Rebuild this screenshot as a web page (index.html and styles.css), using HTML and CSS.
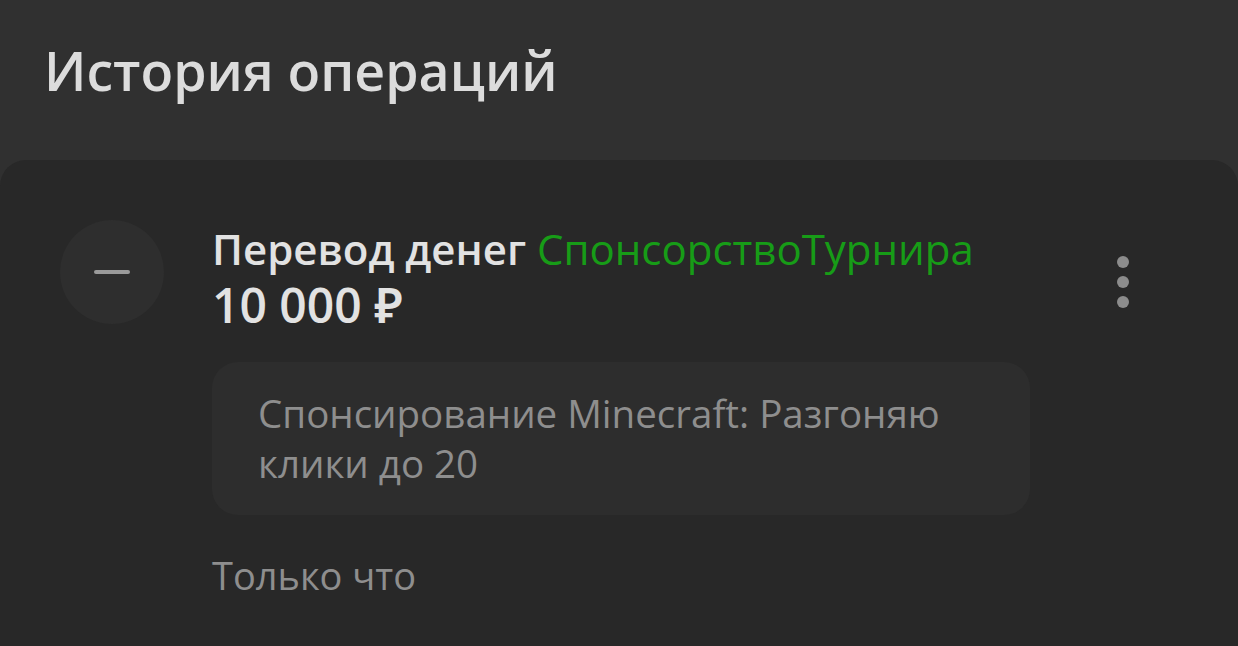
FILE: index.html
```html
<!doctype html>
<html>
  <head>
    <meta charset="utf-8" />
    <title>История операций</title>
    <link rel="stylesheet" href="styles.css">
  </head>

  <body>
    <h1 class="page-title">История операций</h1>

    <div class="card">
      <div class="op">
        <div class="op-icon"><span class="minus"></span></div>

        <div class="op-body">
          <div class="op-title">Перевод денег <span class="op-target">СпонсорствоТурнира</span></div>
          <div class="op-amount">10 000 ₽</div>

          <div class="op-comment">Спонсирование Minecraft: Разгоняю клики до 20</div>

          <div class="op-time">Только что</div>
        </div>

        <div class="op-menu">
          <span></span>
          <span></span>
          <span></span>
        </div>
      </div>
    </div>
  </body>
</html>
```

FILE: styles.css
```css
body {
  margin: 0;
  background-color: #303030;
  font-family: "Open Sans", "Noto Sans", sans-serif;
  color: #e2e2e2;
  overflow: hidden;
}

.page-title {
  margin: 0;
  padding: 35px 0 0 44px;
  height: 122px;
  box-sizing: border-box;
  font-size: 53.6px;
  font-weight: 600;
  line-height: 72px;
  color: #dcdcdc;
}

.card {
  background-color: #282828;
  border-radius: 26px 26px 0 0;
  height: 486px;
  margin-top: 38px;
}

.op {
  display: flex;
  padding: 60px 0 0 60px;
}

.op-icon {
  width: 104px;
  height: 104px;
  border-radius: 50%;
  background-color: #2e2e2e;
  display: flex;
  align-items: center;
  justify-content: center;
  flex-shrink: 0;
}

.minus {
  width: 36px;
  height: 4px;
  border-radius: 2px;
  background-color: #9a9a9a;
}

.op-body {
  margin-left: 48px;
  width: 818px;
}

.op-title {
  font-size: 42px;
  font-weight: 600;
  line-height: 50px;
  margin-top: 4px;
  white-space: nowrap;
}

.op-target {
  color: #179c17;
  font-weight: 500;
}

.op-amount {
  margin-top: 3px;
  font-size: 48px;
  font-weight: 600;
  line-height: 56px;
}

.op-comment {
  margin-top: 29px;
  background-color: #2d2d2d;
  border-radius: 26px;
  padding: 26px 46px 27px 46px;
  font-size: 38.5px;
  line-height: 50px;
  color: #8e8e8e;
}

.op-time {
  margin-top: 35px;
  font-size: 38px;
  line-height: 50px;
  color: #8e8e8e;
}

.op-menu {
  margin-left: 87px;
  margin-top: 36px;
  display: flex;
  flex-direction: column;
  gap: 8px;
}

.op-menu span {
  width: 12px;
  height: 12px;
  border-radius: 50%;
  background-color: #8c8c8c;
}
```
